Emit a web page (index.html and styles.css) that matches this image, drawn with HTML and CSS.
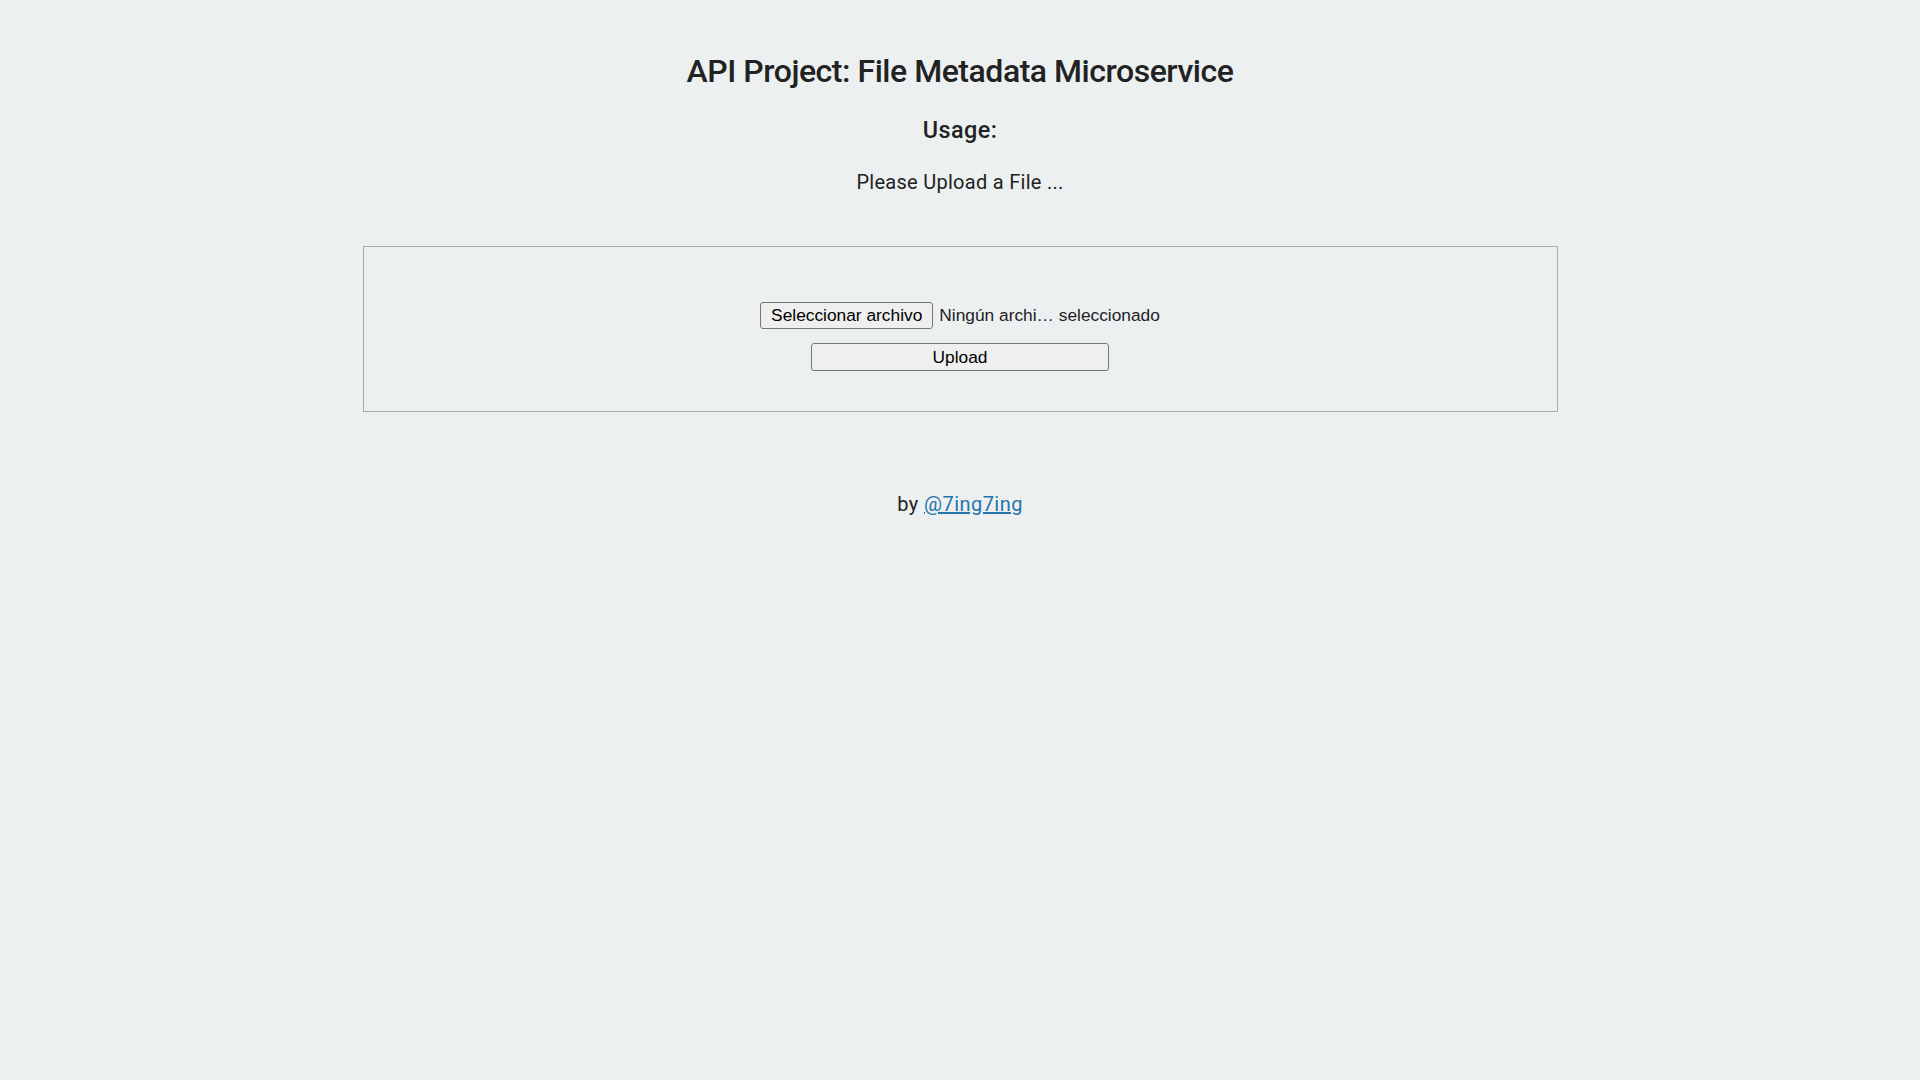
FILE: index.html
```html
<!DOCTYPE html>
<html lang="es">
<head>
<meta charset="utf-8">
<title>File Metadata Microservice</title>
<link rel="stylesheet" href="styles.css">
</head>
<body>
  <div class="container">
    <h1 class="title">API Project: File Metadata Microservice</h1>
    <h3 class="subtitle">Usage:</h3>
    <p class="lead">Please Upload a File ...</p>
    <div class="view">
      <form class="upload-form" onsubmit="return false;">
        <div class="file-row">
          <label class="btn file-btn">Seleccionar archivo<input class="file-input" type="file" name="upfile"></label>
          <span class="file-name">Ningún archi… seleccionado</span>
        </div>
        <button class="btn submit-btn" type="submit">Upload</button>
      </form>
    </div>
  </div>
  <div class="footer">
    <p class="credit">by <a class="credit-link" href="#">@7ing7ing</a></p>
  </div>
</body>
</html>
```
FILE: styles.css
```css
html, body {
  margin: 0;
  padding: 0;
}

body {
  font-family: "Roboto", "Liberation Sans", sans-serif;
  color: #222;
  background-color: #ECF0F1;
  text-align: center;
}

.container {
  padding: 52px 0 0;
}

.title {
  margin: 0;
  font-size: 32px;
  line-height: 38px;
  font-weight: 500;
  letter-spacing: -0.47px;
}

.subtitle {
  margin: 26px 0 0;
  font-size: 23.4px;
  line-height: 28px;
  font-weight: 500;
  letter-spacing: 0.45px;
}

.lead {
  margin: 26px 0 0;
  font-size: 20px;
  line-height: 24px;
  letter-spacing: 0.28px;
}

.view {
  width: 1195px;
  box-sizing: border-box;
  margin: 52px auto 0;
  border: 1px solid #aaa;
  padding: 55px 20px 40px;
}

.upload-form {
  display: flex;
  flex-direction: column;
  align-items: center;
  gap: 14px;
}

.file-row {
  display: flex;
  align-items: center;
  gap: 6px;
  font-family: "Liberation Sans", Arial, sans-serif;
  font-size: 17.33px;
}

.btn {
  box-sizing: border-box;
  font-family: "Liberation Sans", Arial, sans-serif;
  font-size: 17.33px;
  color: #000;
  background-color: #efefef;
  border: 1px solid #767676;
  border-radius: 3px;
  height: 27px;
  padding: 0 10px;
  display: flex;
  align-items: center;
  justify-content: center;
}

.file-btn {
  position: relative;
  overflow: hidden;
}

.file-input {
  position: absolute;
  inset: 0;
  opacity: 0;
}

.file-name {
  color: #222;
}

.submit-btn {
  width: 298px;
  height: 28px;
}

.footer {
  margin-top: 80px;
}

.credit {
  margin: 0;
  font-size: 20px;
  line-height: 24px;
  letter-spacing: 0.45px;
}

.credit-link {
  color: #2574A9;
}
```
